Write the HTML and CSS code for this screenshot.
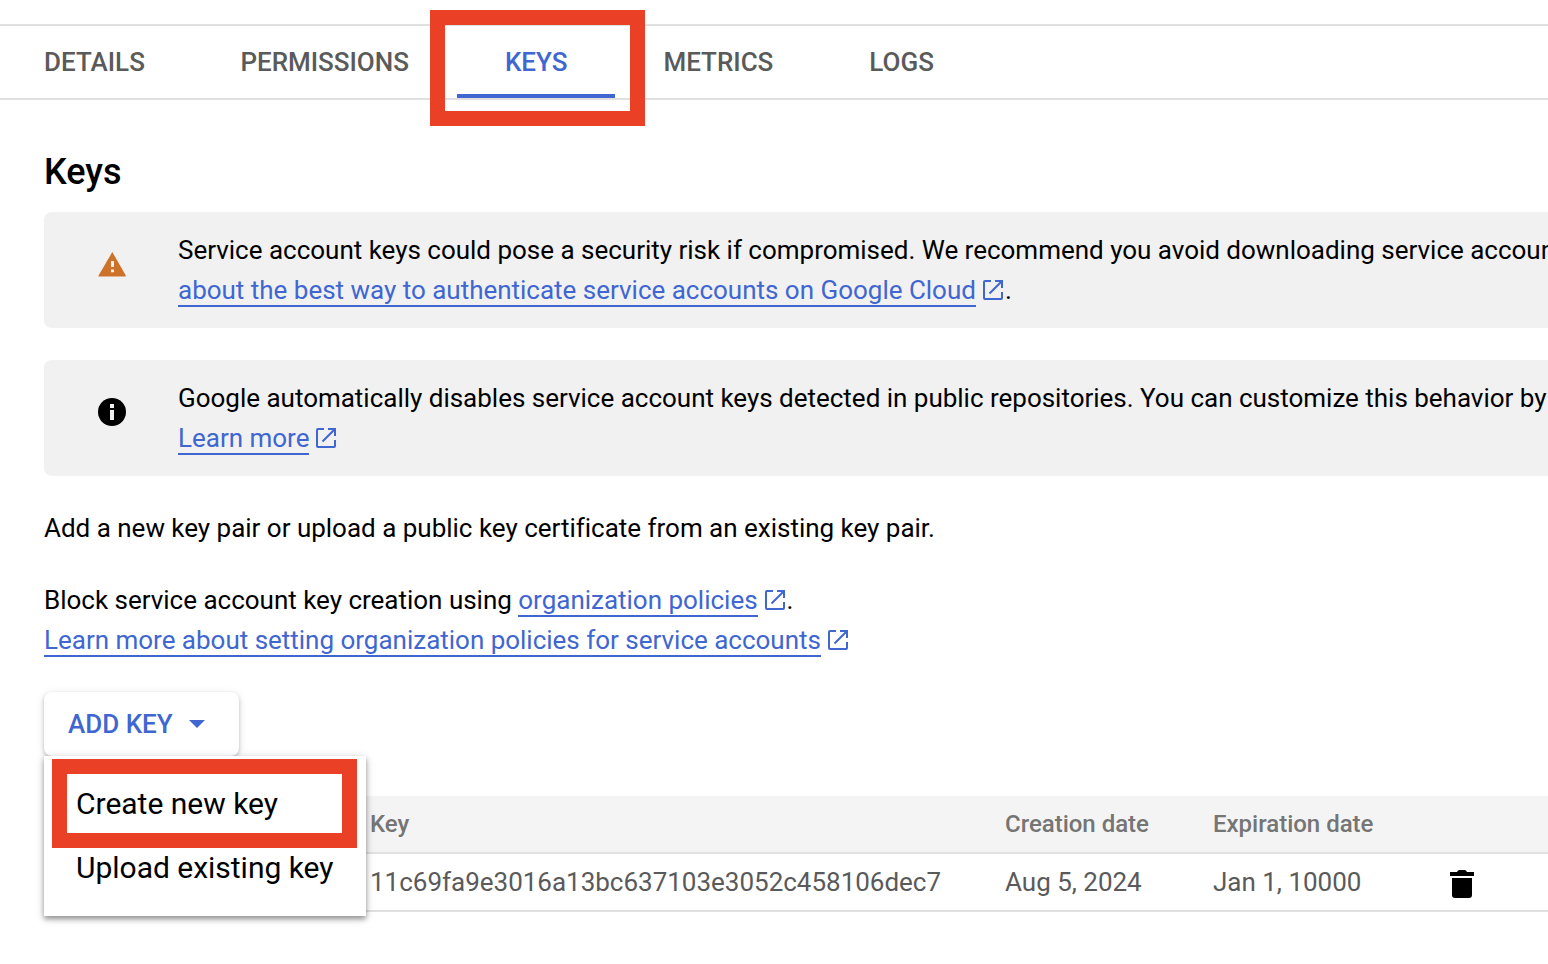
FILE: index.html
```html
<!DOCTYPE html>
<html lang="en">
<head>
<meta charset="utf-8">
<title>Keys</title>
<link rel="stylesheet" href="styles.css">
</head>
<body>
<svg class="defs" width="0" height="0">
  <symbol id="ext" viewBox="0 0 20 20"><path d="M8 1H2a1 1 0 0 0-1 1V18a1 1 0 0 0 1 1H18a1 1 0 0 0 1-1V12M12 1H19V8M18.500 1.500L6.500 13.500" fill="none" stroke="currentColor" stroke-width="2"/></symbol>
</svg>
<nav class="tabs">
  <a class="tab">DETAILS</a>
  <a class="tab">PERMISSIONS</a>
  <a class="tab active">KEYS<span class="mark mark-tab"></span></a>
  <a class="tab">METRICS</a>
  <a class="tab">LOGS</a>
</nav>
<main class="content">
  <h1 class="title">Keys</h1>
  <section class="banner">
    <svg class="banner-icon" viewBox="0 0 28 28"><path d="M14.300 2L27.800 25.500Q28 26.500 27 26.500H1.200Q.2 26.500.6 25.500Z" fill="#ce7229"/><path d="M13 11h3v6h-3zM13 19.500h3v2.800h-3z" fill="#f1f1f1"/></svg>
    <p class="banner-text">Service account keys could pose a security risk if compromised. We recommend you avoid downloading service account keys<br><a class="link">about the best way to authenticate service accounts on Google Cloud</a><svg class="ext"><use href="#ext"/></svg>.</p>
  </section>
  <section class="banner">
    <svg class="banner-icon" viewBox="0 0 28 28"><circle cx="14" cy="14" r="14" fill="#000"/><path d="M12 6h4v4h-4zM12 12h4v10h-4z" fill="#f1f1f1"/></svg>
    <p class="banner-text">Google automatically disables service account keys detected in public repositories. You can customize this behavior by using<br><a class="link">Learn more</a><svg class="ext"><use href="#ext"/></svg></p>
  </section>
  <p class="para">Add a new key pair or upload a public key certificate from an existing key pair.</p>
  <p class="para">Block service account key creation using <a class="link">organization policies</a><svg class="ext"><use href="#ext"/></svg>.<br><a class="link">Learn more about setting organization policies for service accounts</a><svg class="ext"><use href="#ext"/></svg></p>
  <div class="add">
    <button class="add-btn"><span>ADD KEY</span><svg class="caret" viewBox="0 0 16 8"><path d="M0 0h16L8 8z" fill="#4066d1"/></svg></button>
    <div class="menu">
      <div class="item">Create new key<span class="mark mark-menu"></span></div>
      <div class="item">Upload existing key</div>
    </div>
  </div>
  <div class="table">
    <div class="row head"><span>Key</span><span>Creation date</span><span>Expiration date</span></div>
    <div class="row"><span>11c69fa9e3016a13bc637103e3052c458106dec7</span><span>Aug 5, 2024</span><span>Jan 1, 10000</span><svg class="trash" viewBox="0 0 24 28"><path d="M0 2h7l1-1.500Q8.500 0 9.500 0h5q1 0 1.500.5l1 1.500H24v4H0zM2 8h20v17q0 3-3 3H5q-3 0-3-3z"/></svg></div>
  </div>
</main>
</body>
</html>
```
FILE: styles.css
```css
* { box-sizing: border-box; }
body {
  margin: 0;
  padding-top: 24px;
  height: 964px;
  overflow: hidden;
  background: #fff;
  color: #000;
  font: 400 26px/40px Roboto, sans-serif;
  letter-spacing: -0.012px;
}
.defs { position: absolute; }
.tabs {
  display: flex;
  height: 76px;
  border-top: 2px solid #e0e0e0;
  border-bottom: 2px solid #e0e0e0;
  color: #5a5a5a;
  font-weight: 500;
  line-height: 72px;
}
.tab { padding: 0 48px; white-space: nowrap; }
.tab:first-child { padding: 0 47.500px 0 44px; }
.active {
  position: relative;
  color: #4066d1;
  box-shadow: inset 0 -4px #4066d1;
}
.mark { position: absolute; border: 15px solid #ea4025; pointer-events: none; }
.mark-tab { left: -27px; top: -16px; width: 215px; height: 116px; }
.content { padding-left: 44px; }
.title { margin: 48px 0 16px; font-size: 36px; line-height: 48px; font-weight: 500; }
.banner {
  display: flex;
  align-items: flex-start;
  height: 116px;
  padding: 18px 0 0 54px;
  margin-bottom: 32px;
  border-radius: 8px 0 0 8px;
  background: #f1f1f1;
  overflow: hidden;
}
.banner-icon { flex: none; width: 28px; height: 28px; margin: 20px 52px 0 0; }
.banner-text { margin: 0; white-space: nowrap; }
.link { color: #4066d1; border-bottom: 2px solid #4066d1; }
.ext { width: 20px; height: 20px; margin: 0 2px 0 7px; vertical-align: -1px; color: #4066d1; }
.para { margin: 0 0 32px; white-space: nowrap; }
.add { position: relative; width: 195px; }
.add-btn {
  display: flex;
  align-items: center;
  gap: 16px;
  width: 195px;
  height: 64px;
  padding: 0 24px;
  border: 0;
  border-radius: 8px;
  background: #fff;
  color: #4066d1;
  font: 500 26px/64px Roboto, sans-serif;
  white-space: nowrap;
  box-shadow: 0 2px 4px rgba(0,0,0,.2), 0 2px 10px rgba(0,0,0,.1);
}
.caret { flex: none; width: 16px; height: 8px; }
.menu {
  position: absolute;
  z-index: 2;
  left: 0;
  top: 64px;
  width: 322px;
  height: 160px;
  padding-top: 16px;
  background: #fff;
  font-size: 30px;
  line-height: 64px;
  white-space: nowrap;
  box-shadow: 0 3px 5px rgba(0,0,0,.36), 0 2px 10px rgba(0,0,0,.14);
}
.item { position: relative; height: 64px; padding-left: 32px; }
.mark-menu { left: 8px; top: -13px; width: 305px; height: 89px; }
.table { margin-top: 40px; color: #5a5a5a; }
.row {
  display: grid;
  grid-template-columns: 635px 208px 237px 24px;
  align-items: center;
  height: 58px;
  padding-left: 326px;
  border-bottom: 2px solid #e0e0e0;
  white-space: nowrap;
}
.head { background: #f4f4f4; color: #757575; font-size: 24px; font-weight: 500; }
.trash { width: 24px; height: 28px; margin-top: 4px; }
```
